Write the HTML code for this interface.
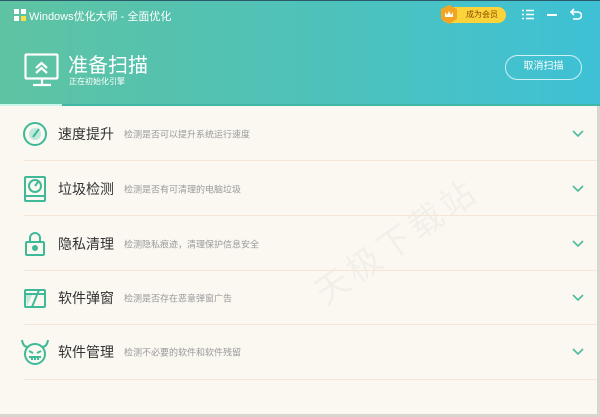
<!DOCTYPE html>
<html><head><meta charset="utf-8"><style>
*{margin:0;padding:0;box-sizing:border-box}
body{width:600px;height:417px;overflow:hidden;background:#fbf8f2;font-family:"Liberation Sans","Noto Sans CJK SC",sans-serif;position:relative}
.hd{position:absolute;left:0;top:0;width:600px;height:105px;background:linear-gradient(90deg,#5ec3a2 0%,#4fc2b8 50%,#3ec1d6 100%)}
.t{position:absolute;color:#fff}
.row{position:absolute;left:0;width:597px;height:55px}
.sep{position:absolute;left:24px;right:0;bottom:0;height:1px;background:#f6e6d6}
.nm{position:absolute;left:58px;top:50%;transform:translateY(-50%);font-size:14px;color:#333}
.ds{position:absolute;left:124px;top:50%;transform:translateY(-50%);font-size:9px;color:#999}
.ic{position:absolute;left:22px;top:50%;transform:translateY(-50%)}
.ch{position:absolute;left:572px;top:50%;transform:translateY(-50%)}
</style></head><body>
<div class="hd">
 <div style="position:absolute;left:0;top:0;width:600px;height:1px;background:#2d5a6a"></div>
 <svg style="position:absolute;left:14px;top:9px" width="12" height="12"><rect x="0" y="0" width="5" height="5" fill="#fff"/><rect x="7" y="0" width="5" height="5" fill="#fff"/><rect x="0" y="7" width="5" height="5" fill="#fff"/><rect x="7" y="7" width="5" height="5" fill="#f6e04a"/></svg>
 <div class="t" style="left:29px;top:8px;font-size:11px">Windows优化大师 - 全面优化</div>
 <div style="position:absolute;left:441px;top:7px;width:65px;height:16px;border-radius:8px;background:#fcd33a"></div>
 <svg style="position:absolute;left:440px;top:5px" width="18" height="20"><path d="M9 0 L17 4 L17 14 L9 19 L1 14 L1 4Z" fill="#f3a422"/><path d="M5 7 L7 10 L9 6 L11 10 L13 7 L13 12 L5 12Z" fill="#fff"/></svg>
 <div style="position:absolute;left:466px;top:9px;font-size:8px;color:#8a4b00">成为会员</div>
 <svg style="position:absolute;left:522px;top:9px" width="12" height="11" stroke="#fff" stroke-width="1.6"><path d="M0 1.5h2M4 1.5h8M0 5.5h2M4 5.5h8M0 9.5h2M4 9.5h8"/></svg>
 <div style="position:absolute;left:547px;top:14px;width:10px;height:2px;background:#fff"></div>
 <svg style="position:absolute;left:570px;top:8px" width="12" height="12" fill="none" stroke="#fff" stroke-width="1.6"><path d="M4 1 L1 4 L4 7 M1 4 H8 A3 3 0 0 1 8 11 H3"/></svg>
 <svg style="position:absolute;left:24px;top:53px" width="36" height="34" fill="none" stroke="#fff" stroke-width="2.2"><rect x="1.5" y="1.5" width="32" height="24" rx="1"/><path d="M18 26v6M9 32h18M12 15l5.5-5 5.5 5M12 20l5.5-5 5.5 5"/></svg>
 <div class="t" style="left:68px;top:49px;font-size:20px">准备扫描</div>
 <div class="t" style="left:69px;top:76px;font-size:8px">正在初始化引擎</div>
 <div style="position:absolute;left:505px;top:55px;width:77px;height:25px;border:1.5px solid rgba(255,255,255,.75);border-radius:13px;color:#fff;font-size:10px;text-align:center;line-height:22px">取消扫描</div>
</div>
<div style="position:absolute;left:0;top:104px;width:600px;height:2px;background:#3fb9a5"></div>
<div style="position:absolute;left:0;top:104px;width:62px;height:2px;background:#c8f7ea"></div>
<div style="position:absolute;left:597px;top:106px;width:3px;height:311px;background:#d9d6d0"></div>
<div style="position:absolute;left:0;top:414px;width:600px;height:3px;background:#d9d6d0"></div>
<div style="position:absolute;left:300px;top:215px;font-size:34px;color:rgba(0,0,0,.035);transform:rotate(-35deg);letter-spacing:4px">天极下载站</div>

<div class="row" style="top:106px"><svg class="ic" width="26" height="26" fill="none" stroke="#3fb998" stroke-width="2"><circle cx="13" cy="13" r="11"/><circle cx="13" cy="13" r="6" fill="#bfe9dc" stroke="none"/><path d="M11 16 L17 8"/></svg><div class="nm">速度提升</div><div class="ds">检测是否可以提升系统运行速度</div><svg class="ch" width="12" height="8" fill="none" stroke="#4dbb9c" stroke-width="1.6"><path d="M1 1l5 5 5-5"/></svg><div class="sep"></div></div>
<div class="row" style="top:161px"><svg class="ic" style="left:24px" width="22" height="26" fill="none" stroke="#3fb998" stroke-width="2"><rect x="1" y="1" width="20" height="24" rx="1"/><path d="M1 20h20"/><circle cx="11" cy="10" r="6"/><path d="M11 10l3-4"/></svg><div class="nm">垃圾检测</div><div class="ds">检测是否有可清理的电脑垃圾</div><svg class="ch" width="12" height="8" fill="none" stroke="#4dbb9c" stroke-width="1.6"><path d="M1 1l5 5 5-5"/></svg><div class="sep"></div></div>
<div class="row" style="top:216px"><svg class="ic" style="left:25px" width="20" height="26" fill="none" stroke="#3fb998" stroke-width="2"><path d="M5 11V7a5 5 0 0 1 10 0v4"/><rect x="1" y="11" width="18" height="13" rx="1"/><circle cx="10" cy="17" r="2" fill="#3fb998"/></svg><div class="nm">隐私清理</div><div class="ds">检测隐私痕迹，清理保护信息安全</div><svg class="ch" width="12" height="8" fill="none" stroke="#4dbb9c" stroke-width="1.6"><path d="M1 1l5 5 5-5"/></svg><div class="sep"></div></div>
<div class="row" style="top:270px"><svg class="ic" style="left:24px" width="22" height="22" fill="none" stroke="#3fb998" stroke-width="2"><rect x="1" y="3" width="20" height="17" rx="1"/><path d="M1 7h20M8 20L15 3"/><path d="M2 8h6l-5 11z" fill="#bfe9dc" stroke="none"/></svg><div class="nm">软件弹窗</div><div class="ds">检测是否存在恶意弹窗广告</div><svg class="ch" width="12" height="8" fill="none" stroke="#4dbb9c" stroke-width="1.6"><path d="M1 1l5 5 5-5"/></svg><div class="sep"></div></div>
<div class="row" style="top:324px;height:56px"><svg class="ic" style="left:20px" width="30" height="28" fill="none" stroke="#3fb998" stroke-width="2"><path d="M2 2 Q3 9 8 9 M28 2 Q27 9 22 9"/><circle cx="15" cy="16" r="10"/><path d="M9 13l4 2M21 13l-4 2M9 19h12M12 19v3M15 19v3M18 19v3"/></svg><div class="nm">软件管理</div><div class="ds">检测不必要的软件和软件残留</div><svg class="ch" width="12" height="8" fill="none" stroke="#4dbb9c" stroke-width="1.6"><path d="M1 1l5 5 5-5"/></svg><div class="sep"></div></div>
</body></html>
